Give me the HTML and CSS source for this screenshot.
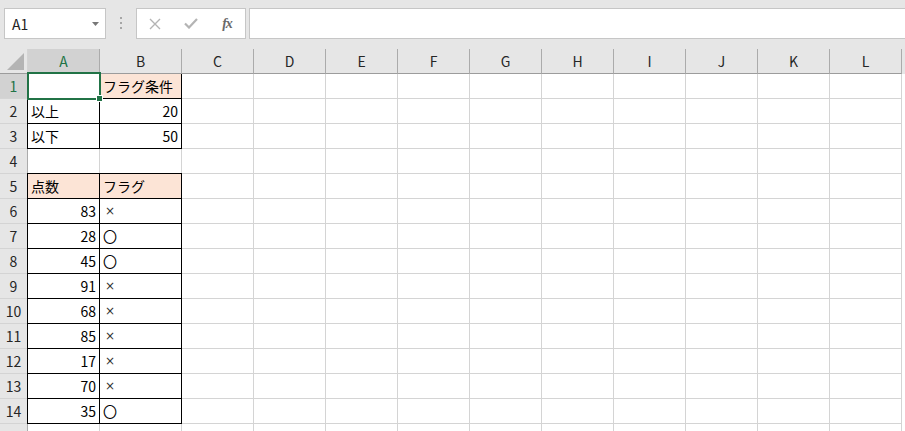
FILE: index.html
```html
<!DOCTYPE html>
<html lang="ja">
<head>
    <meta charset="UTF-8">
    <title>Book1 - Excel</title>
    <link rel="stylesheet" href="styles.css">
</head>
<body>

    <div class="toolbar">
        <div class="namebox">
            <span>A1</span>
            <svg width="7" height="4" viewBox="0 0 7 4"><path d="M0 0h7L3.5 4z" fill="#777"/></svg>
        </div>
        <div class="grip">
            <svg width="3" height="13" viewBox="0 0 3 13"><rect x="0" y="0" width="2" height="2" fill="#a6a6a6"/><rect x="0" y="5" width="2" height="2" fill="#a6a6a6"/><rect x="0" y="10" width="2" height="2" fill="#a6a6a6"/></svg>
        </div>
        <div class="fxbox">
            <div class="fxbtn">
                <svg width="12" height="12" viewBox="0 0 12 12"><path d="M1 1l10 10M11 1L1 11" stroke="#b4b4b4" stroke-width="1.4"/></svg>
            </div>
            <div class="fxbtn">
                <svg width="14" height="11" viewBox="0 0 14 11"><path d="M1 5.5l4 4L13 1" stroke="#b4b4b4" stroke-width="2.2" fill="none"/></svg>
            </div>
            <div class="fxbtn"><span class="fx">fx</span></div>
        </div>
        <div class="formula"></div>
    </div>

    <div class="sheet">
        <div class="row head">
            <div class="corner"><svg width="17" height="17" viewBox="0 0 17 17"><path d="M17 0V17H0z" fill="#b4b4b4"/></svg></div>
            <div class="sel">A</div><div>B</div><div>C</div><div>D</div><div>E</div><div>F</div>
            <div>G</div><div>H</div><div>I</div><div>J</div><div>K</div><div>L</div>
        </div>

        <div class="row">
            <div class="rh sel">1</div>
            <div class="t tl active"></div><div class="t fill">フラグ条件</div>
            <div></div><div></div><div></div><div></div><div></div><div></div><div></div><div></div><div></div><div></div>
        </div>
        <div class="row">
            <div class="rh">2</div>
            <div class="t tl">以上</div><div class="t num">20</div>
            <div></div><div></div><div></div><div></div><div></div><div></div><div></div><div></div><div></div><div></div>
        </div>
        <div class="row">
            <div class="rh">3</div>
            <div class="t tl">以下</div><div class="t num">50</div>
            <div></div><div></div><div></div><div></div><div></div><div></div><div></div><div></div><div></div><div></div>
        </div>
        <div class="row">
            <div class="rh">4</div>
            <div></div><div></div>
            <div></div><div></div><div></div><div></div><div></div><div></div><div></div><div></div><div></div><div></div>
        </div>
        <div class="row">
            <div class="rh">5</div>
            <div class="t tl tt fill">点数</div><div class="t tt fill">フラグ</div>
            <div></div><div></div><div></div><div></div><div></div><div></div><div></div><div></div><div></div><div></div>
        </div>
        <div class="row">
            <div class="rh">6</div>
            <div class="t tl num">83</div><div class="t"><span class="x">×</span></div>
            <div></div><div></div><div></div><div></div><div></div><div></div><div></div><div></div><div></div><div></div>
        </div>
        <div class="row">
            <div class="rh">7</div>
            <div class="t tl num">28</div><div class="t">〇</div>
            <div></div><div></div><div></div><div></div><div></div><div></div><div></div><div></div><div></div><div></div>
        </div>
        <div class="row">
            <div class="rh">8</div>
            <div class="t tl num">45</div><div class="t">〇</div>
            <div></div><div></div><div></div><div></div><div></div><div></div><div></div><div></div><div></div><div></div>
        </div>
        <div class="row">
            <div class="rh">9</div>
            <div class="t tl num">91</div><div class="t"><span class="x">×</span></div>
            <div></div><div></div><div></div><div></div><div></div><div></div><div></div><div></div><div></div><div></div>
        </div>
        <div class="row">
            <div class="rh">10</div>
            <div class="t tl num">68</div><div class="t"><span class="x">×</span></div>
            <div></div><div></div><div></div><div></div><div></div><div></div><div></div><div></div><div></div><div></div>
        </div>
        <div class="row">
            <div class="rh">11</div>
            <div class="t tl num">85</div><div class="t"><span class="x">×</span></div>
            <div></div><div></div><div></div><div></div><div></div><div></div><div></div><div></div><div></div><div></div>
        </div>
        <div class="row">
            <div class="rh">12</div>
            <div class="t tl num">17</div><div class="t"><span class="x">×</span></div>
            <div></div><div></div><div></div><div></div><div></div><div></div><div></div><div></div><div></div><div></div>
        </div>
        <div class="row">
            <div class="rh">13</div>
            <div class="t tl num">70</div><div class="t"><span class="x">×</span></div>
            <div></div><div></div><div></div><div></div><div></div><div></div><div></div><div></div><div></div><div></div>
        </div>
        <div class="row">
            <div class="rh">14</div>
            <div class="t tl num">35</div><div class="t">〇</div>
            <div></div><div></div><div></div><div></div><div></div><div></div><div></div><div></div><div></div><div></div>
        </div>
        <div class="row">
            <div class="rh">15</div>
            <div></div><div></div>
            <div></div><div></div><div></div><div></div><div></div><div></div><div></div><div></div><div></div><div></div>
        </div>
    </div>

</body>
</html>
```

FILE: styles.css
```css
body {
    margin: 0;
    height: 431px;
    overflow: hidden;
    background: #e6e6e6;
    font-family: "Noto Sans CJK JP", "Noto Sans", sans-serif;
    color: #000;
}

/* Formula bar */
.toolbar {
    display: flex;
    height: 31px;
    padding: 8px 0 10px 4px;
}

.namebox {
    width: 102px;
    box-sizing: border-box;
    border: 1px solid #c6c6c6;
    background: #fff;
    display: flex;
    align-items: center;
    justify-content: space-between;
    padding: 0 6px 0 7px;
    font-size: 14px;
    color: #222;
}

.grip {
    width: 30px;
    display: flex;
    align-items: center;
    justify-content: center;
}

.fxbox {
    width: 110px;
    box-sizing: border-box;
    border: 1px solid #c6c6c6;
    background: #fff;
    display: flex;
    margin-right: 3px;
}

.fxbtn {
    width: 36px;
    display: flex;
    align-items: center;
    justify-content: center;
}

.fx {
    font-family: "Liberation Serif", serif;
    font-style: italic;
    font-weight: bold;
    font-size: 14px;
    color: #6a6a6a;
    letter-spacing: -1px;
}

.formula {
    flex: 1;
    border: 1px solid #c6c6c6;
    border-right: none;
    background: #fff;
}

/* Sheet grid */
.sheet {
    background: #fff;
}

.row {
    display: flex;
    height: 25px;
}

.row > div {
    flex-shrink: 0;
    width: 72px;
    box-sizing: border-box;
    border-right: 1px solid #d4d4d4;
    border-bottom: 1px solid #d4d4d4;
    display: flex;
    align-items: center;
    padding: 0 3px;
    font-size: 14px;
    white-space: nowrap;
    overflow: hidden;
}

.row > div:first-child {
    width: 28px;
}

.row > div:nth-child(3) {
    width: 82px;
}

.head {
    background: #e6e6e6;
}

.head > div {
    justify-content: center;
    border-right-color: #ababab;
    border-bottom-color: #9c9c9c;
    color: #262626;
}

.head > .corner {
    border-right-color: #d4d4d4;
    align-items: flex-end;
    justify-content: flex-end;
    padding: 0 3px 3px 0;
}

.rh {
    background: #e6e6e6;
    justify-content: center;
    border-right-color: #ababab !important;
    color: #262626;
}

.sel {
    background: #d2d2d2 !important;
    color: #217346 !important;
}

/* Table cells */
.row > .t {
    border-right-color: #000;
    border-bottom-color: #000;
}

.tl {
    box-shadow: -1px 0 0 #000;
}

.tl.tt {
    box-shadow: -1px 0 0 #000, 0 -1px 0 #000, -1px -1px 0 #000;
}

.tt {
    box-shadow: 0 -1px 0 #000;
}

.fill {
    background: #fce4d6;
}

.num {
    justify-content: flex-end;
}

.x {
    font-family: "DejaVu Sans", sans-serif;
    font-size: 12px;
    color: #333;
    padding-left: 2px;
}

/* Selected cell */
.row > .active {
    position: relative;
    overflow: visible;
    z-index: 2;
}

.active::after {
    content: "";
    position: absolute;
    top: -2px;
    left: -1px;
    right: -2px;
    bottom: -2px;
    border: 2px solid #217346;
}

.active::before {
    content: "";
    position: absolute;
    right: -4px;
    bottom: -4px;
    width: 5px;
    height: 5px;
    background: #217346;
    border: 1px solid #fff;
    z-index: 1;
}
```
